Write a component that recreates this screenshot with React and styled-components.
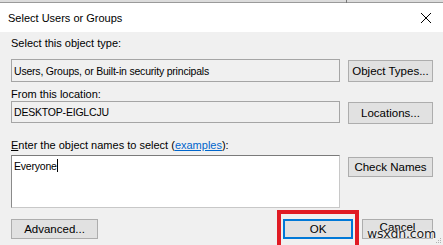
import React from "react";
import styled, { createGlobalStyle } from "styled-components";

const Global = createGlobalStyle`
  html, body { margin: 0; padding: 0; background: #f0f0f0; }
  #root { width: 443px; height: 245px; overflow: hidden; position: relative; }
  * { box-sizing: border-box; }
`;

const Window = styled.div`
  width: 443px;
  height: 245px;
  display: flex;
  flex-direction: column;
  font-family: "Liberation Sans", Arial, sans-serif;
  font-size: 11px;
  color: #000;
  position: relative;
  background: #f0f0f0;
`;

const TopStrip = styled.div`
  height: 3px;
  background: #dcdcdc;
  border-bottom: 1px solid #9a9a9a;
  position: relative;
`;

const StripTick = styled.div`
  position: absolute;
  left: 346px;
  top: 0;
  width: 1px;
  height: 3px;
  background: #777;
`;

const TitleBar = styled.div`
  height: 29px;
  background: #fff;
  display: flex;
  align-items: center;
  justify-content: space-between;
  padding: 0 6px 0 8px;
`;

const Title = styled.span`
  font-size: 11px;
  color: #000;
`;

const CloseBtn = styled.div`
  width: 12px;
  height: 12px;
  margin-right: 5px;
  display: flex;
`;

const Content = styled.div`
  flex: 1;
  padding: 4px 10px 0 11px;
  display: flex;
  flex-direction: column;
`;

const Label = styled.div`
  line-height: 14px;
  height: 14px;
  margin-top: ${(p) => p.$mt || 0}px;
  margin-bottom: ${(p) => p.$mb || 0}px;
  color: #000;
`;

const Row = styled.div`
  display: grid;
  grid-template-columns: 329px 85px;
  column-gap: 8px;
  align-items: start;
`;

const ReadBox = styled.div`
  height: ${(p) => p.$h}px;
  border: 1px solid #a5a5a5;
  background: #f0f0f0;
  display: flex;
  align-items: center;
  padding-left: 2px;
  font-size: 10.5px;
  letter-spacing: -0.2px;
`;

const EditBox = styled.div`
  height: 53px;
  background: #fff;
  border: 1px solid #c8c8c8;
  border-top-color: #7a7a7a;
  border-left-color: #8a8a8a;
  padding: 3px 2px;
  line-height: 14px;
  font-size: 10.5px;
  letter-spacing: -0.2px;
`;

const Caret = styled.span`
  display: inline-block;
  width: 1px;
  height: 13px;
  background: #000;
  vertical-align: -2px;
`;

const Button = styled.div`
  height: ${(p) => p.$h || 20}px;
  width: ${(p) => p.$w || 85}px;
  margin-top: ${(p) => p.$mt || 0}px;
  background: #e1e1e1;
  border: 1px solid ${(p) => (p.$default ? "#0078d7" : "#adadad")};
  box-shadow: ${(p) => (p.$default ? "inset 0 0 0 1px #0078d7" : "none")};
  display: flex;
  align-items: center;
  justify-content: center;
  padding-bottom: ${(p) => p.$pb || 0}px;
  font-size: 11.5px;
  color: #000;
`;

const Underline = styled.span`
  text-decoration: underline;
`;

const Link = styled.span`
  color: #0066cc;
  text-decoration: underline;
`;

const ButtonRow = styled.div`
  margin-top: 11px;
  display: flex;
  align-items: center;
`;

const Spacer = styled.div`
  flex: 1;
`;

const ButtonGap = styled.div`
  width: 9px;
`;

const Highlight = styled.div`
  position: absolute;
  left: 277px;
  top: 210px;
  width: 82px;
  height: 40px;
  border: 4px solid #e01b24;
  pointer-events: none;
`;

const Watermark = styled.div`
  position: absolute;
  left: 367px;
  top: 227px;
  font-family: "DejaVu Sans", sans-serif;
  font-size: 12.5px;
  line-height: 14px;
  color: #222;
  text-shadow: 0 0 2px #fff, 0 0 2px #fff;
  letter-spacing: -0.2px;
`;

const Grip = styled.svg`
  position: absolute;
  right: 1px;
  bottom: 1px;
`;

export default function App() {
  return (
    <>
      <Global />
      <Window>
        <TopStrip>
          <StripTick />
        </TopStrip>
        <TitleBar>
          <Title>Select Users or Groups</Title>
          <CloseBtn>
            <svg width="12" height="12" viewBox="0 0 12 12">
              <path d="M1 1 L11 11 M11 1 L1 11" stroke="#000" strokeWidth="1" />
            </svg>
          </CloseBtn>
        </TitleBar>
        <Content>
          <Label $mb={9}>Select this object type:</Label>
          <Row>
            <ReadBox $h={23}>Users, Groups, or Built-in security principals</ReadBox>
            <Button $h={22} $mt={1}>Object Types...</Button>
          </Row>
          <Label $mt={5} $mb={0}>From this location:</Label>
          <Row>
            <ReadBox $h={22}>DESKTOP-EIGLCJU</ReadBox>
            <Button $h={22} $mt={1}>Locations...</Button>
          </Row>
          <Label $mt={14} $mb={3}>
            <Underline>E</Underline>nter the object names to select (<Link>examples</Link>):
          </Label>
          <Row>
            <EditBox>
              Everyone
              <Caret />
            </EditBox>
            <Button $h={20} $mt={2}>Check Names</Button>
          </Row>
          <ButtonRow>
            <Button $w={87} $h={20}>Advanced...</Button>
            <Spacer />
            <Button $w={70} $h={20} $default>OK</Button>
            <ButtonGap />
            <Button $w={71} $h={20} $pb={4}>Cancel</Button>
          </ButtonRow>
        </Content>
        <Highlight />
        <Watermark>wsxdn.com</Watermark>
        <Grip width="6" height="6" viewBox="0 0 6 6">
          <rect x="4" y="0" width="1" height="1" fill="#b0b0b0" />
          <rect x="2" y="2" width="1" height="1" fill="#b0b0b0" />
          <rect x="4" y="2" width="1" height="1" fill="#b0b0b0" />
          <rect x="0" y="4" width="1" height="1" fill="#b0b0b0" />
          <rect x="2" y="4" width="1" height="1" fill="#b0b0b0" />
          <rect x="4" y="4" width="1" height="1" fill="#b0b0b0" />
        </Grip>
      </Window>
    </>
  );
}
